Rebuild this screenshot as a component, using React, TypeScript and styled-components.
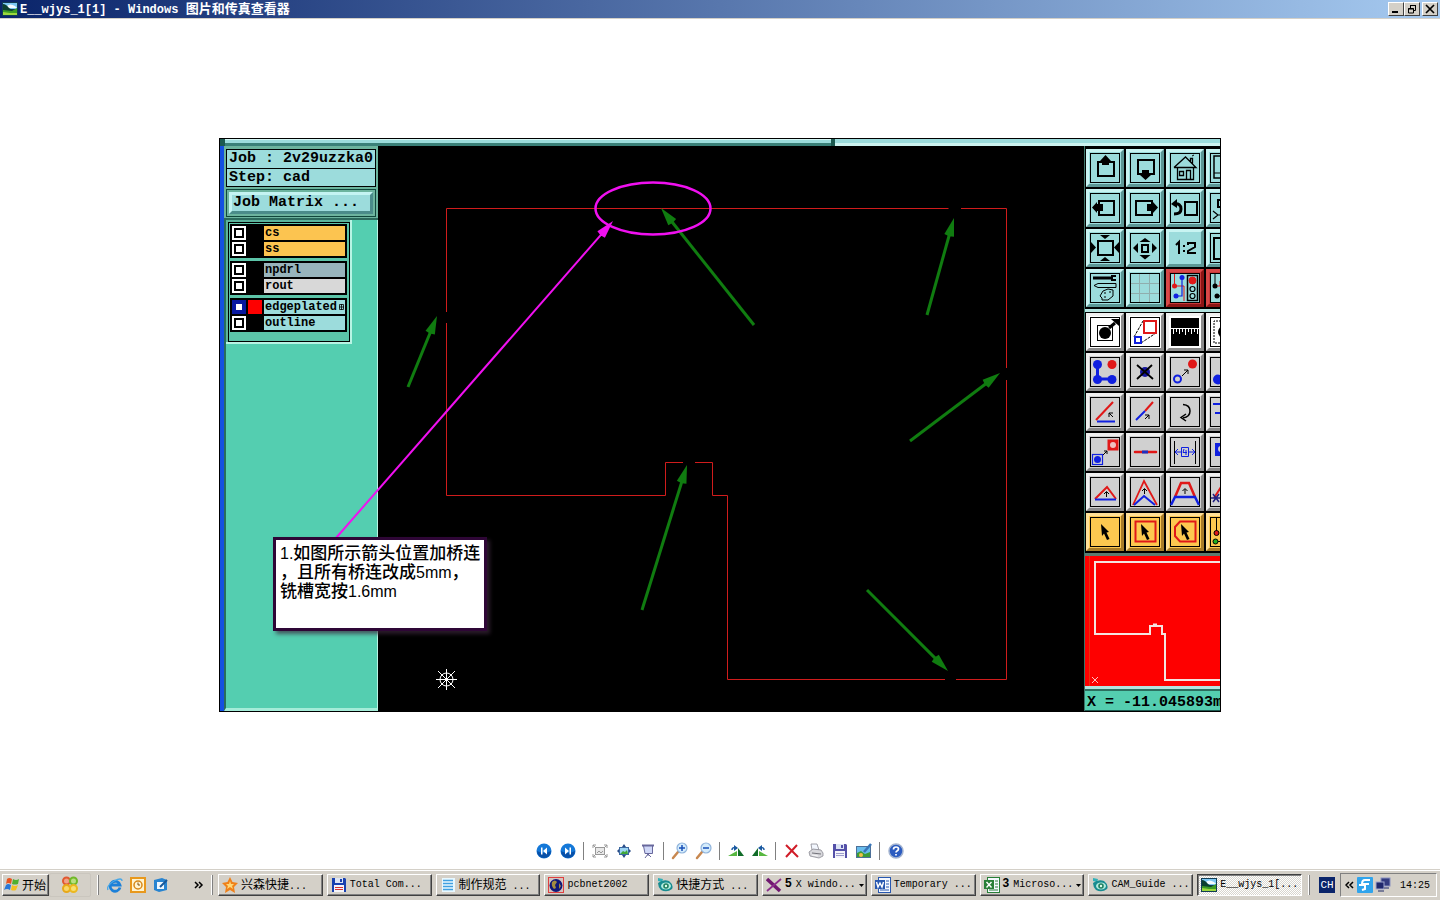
import React from 'react';
import styled, { createGlobalStyle } from 'styled-components';

const face = '#d4d0c8';
const teal = '#54ceb0';
const aqua = '#9cdcdc';
const mono = '"Liberation Mono", "Noto Sans CJK SC", monospace';

const GlobalStyle = createGlobalStyle`
  * { box-sizing: border-box; }
  body { margin: 0; background: #fff; color: #000; font-family: ${mono}; }
  button { font: inherit; color: inherit; margin: 0; }
  svg { display: block; flex: none; }
`;

const Page = styled.div`
  display: flex;
  flex-direction: column;
  min-height: 100vh;
`;

/* ---------- title bar ---------- */

const TitleBar = styled.header`
  display: flex;
  align-items: center;
  gap: 2px;
  height: 19px;
  padding: 0 2px;
  background: linear-gradient(90deg, #0a246a, #a6caf0);
  border-bottom: 1px solid ${face};
`;

const Title = styled.h1`
  flex: 1;
  margin: 0;
  color: #fff;
  font-size: 12px;
  line-height: 16px;
  font-weight: 700;
  white-space: pre;
`;

const Han = styled.span<{ $size: number }>`
  font-family: "Noto Sans CJK SC", sans-serif;
  font-size: ${(p) => p.$size}px;
`;

const WindowButtons = styled.div`
  display: flex;
`;

const WindowButton = styled.button<{ $apart?: boolean }>`
  display: flex;
  align-items: center;
  justify-content: center;
  width: 16px;
  height: 14px;
  padding: 0;
  margin-left: ${(p) => (p.$apart ? 2 : 0)}px;
  background: ${face};
  border: 1px solid;
  border-color: #fff #404040 #404040 #fff;
`;

/* ---------- viewer ---------- */

const Viewer = styled.main`
  flex: 1;
  display: flex;
  align-items: center;
  justify-content: center;
  padding-bottom: 2px;
  overflow: hidden;
`;

const Picture = styled.figure`
  position: relative;
  flex: none;
  margin: 0;
  border: 1px solid #000;
  background: #000;
`;

const TopStrip = styled.div`
  display: flex;
  gap: 4px;
  height: 7px;
  padding-left: 5px;
  background: #1c5a50;
`;

const StripPart = styled.div<{ $width?: number }>`
  width: ${(p) => (p.$width ? `${p.$width}px` : 'auto')};
  flex: ${(p) => (p.$width ? 'none' : 1)};
  background: ${aqua};
  border-top: 1px solid ${(p) => (p.$width ? '#d4f6f4' : aqua)};
  border-bottom: 3px solid ${(p) => (p.$width ? '#3a8078' : '#cdf3f0')};
`;

const Workspace = styled.div`
  display: flex;
`;

const SidePanel = styled.aside`
  display: flex;
  flex-direction: column;
  width: 158px;
  border-left: 4px solid #1450e0;
  background: ${teal};
  font-weight: 700;
`;

const JobHeader = styled.div`
  display: flex;
  flex-direction: column;
  padding: 3px 2px 1px;
  background: #6cb49e;
  border-bottom: 2px solid #2c6a5c;
`;

const JobLine = styled.div<{ $second?: boolean }>`
  height: ${(p) => (p.$second ? 19 : 20)}px;
  margin-top: ${(p) => (p.$second ? -1 : 0)}px;
  padding: 0 2px;
  border: 1px solid #000;
  background: ${aqua};
  font-size: 15px;
  line-height: 18px;
  white-space: pre;
`;

const MatrixBox = styled.div`
  margin-top: 2px;
  padding: 2px;
  border: 1px solid #10483c;
`;

const MatrixButton = styled.button`
  display: block;
  width: 100%;
  height: 22px;
  padding: 0 1px;
  border: 3px solid;
  border-color: #c4f4f2 #4a8c8a #4a8c8a #c4f4f2;
  background: ${aqua};
  font-size: 15px;
  line-height: 16px;
  font-weight: 700;
  text-align: left;
  white-space: pre;
`;

const SideBody = styled.div`
  flex: 1;
  border-left: 2px solid #286c5c;
  border-right: 1px solid #b8f4e4;
  border-bottom: 3px solid #a4ecd8;
`;

const LayerPanel = styled.div`
  width: 126px;
  padding: 2px 0 0 2px;
  background: #5cb49c;
  border-right: 2px solid #b8f4e4;
  border-bottom: 2px solid #b8f4e4;
`;

const LayerList = styled.div`
  display: flex;
  flex-direction: column;
  gap: 3px;
  padding: 1px 2px 9px 1px;
  border: 1px solid #000;
  background: #5cc4a8;
`;

const LayerGroup = styled.div`
  display: flex;
  flex-direction: column;
  gap: 2px;
  padding: 2px;
  background: #000;
`;

const LayerRow = styled.label`
  display: flex;
  align-items: center;
  gap: 2px;
  height: 14px;
`;

const LayerCheck = styled.input<{ $active?: boolean }>`
  appearance: none;
  flex: none;
  width: 14px;
  height: 14px;
  margin: 0;
  border: 2px solid ${(p) => (p.$active ? '#0818a0' : '#fff')};
  background: #fff;
  box-shadow: inset 0 0 0 2px ${(p) => (p.$active ? '#0818a0' : '#000')};
`;

const Swatch = styled.span<{ $color: string }>`
  flex: none;
  width: 14px;
  height: 14px;
  background: ${(p) => p.$color};
`;

const LayerName = styled.span<{ $color: string }>`
  flex: 1;
  display: flex;
  align-items: center;
  justify-content: space-between;
  height: 14px;
  padding: 0 1px;
  background: ${(p) => p.$color};
  font-size: 12px;
  line-height: 14px;
`;

const ToolPanel = styled.aside`
  display: flex;
  flex-direction: column;
  width: 136px;
  overflow: hidden;
  border-left: 1px solid #3c7468;
`;

const ToolGrid = styled.div<{ $top: number }>`
  display: grid;
  grid-template-columns: repeat(4, 38px);
  gap: 2px;
  padding: ${(p) => p.$top}px 0 2px 1px;
  background: #000;
`;

const tones = {
  aqua: [aqua, '#c8f4f2', '#5c9896'],
  red: ['#c83838', '#d84848', '#8c1414'],
  white: ['#fff', '#f0f0f0', '#8c8c8c'],
  grey: ['#d0d0d0', '#efefef', '#8a8a8a'],
  gold: ['#fcc850', '#ffe098', '#a87c28'],
} as const;
type Tone = keyof typeof tones;

const ToolButton = styled.button<{ $tone: Tone }>`
  display: flex;
  width: 38px;
  height: 38px;
  padding: 1px;
  border: 3px solid;
  border-color: ${(p) => `${tones[p.$tone][1]} ${tones[p.$tone][2]} ${tones[p.$tone][2]} ${tones[p.$tone][1]}`};
  background: ${(p) => tones[p.$tone][0]};
`;

const Ridge = styled.div<{ $dark?: boolean }>`
  height: 3px;
  background: ${(p) => (p.$dark ? '#5c7c70' : '#b4e4e0')};
`;

const Coordinates = styled.output`
  display: block;
  height: 22px;
  padding-left: 2px;
  background: ${teal};
  border-top: 2px solid #2c7060;
  border-bottom: 1px solid #1c5a50;
  font-size: 15px;
  line-height: 23px;
  font-weight: 700;
  white-space: pre;
`;

const Annotations = styled.svg`
  position: absolute;
  top: 0;
  left: 0;
`;

const Note = styled.figcaption`
  position: absolute;
  left: 53px;
  top: 398px;
  width: 214px;
  height: 94px;
  padding: 2px 4px;
  border: 3px solid #2e0636;
  background: #fff;
  box-shadow: 3px 3px 4px rgba(60, 40, 60, 0.7);
  font: 16px/19px "Liberation Sans", "Noto Sans CJK SC", sans-serif;
  white-space: pre;
`;

const NoteHan = styled.span`
  font-family: "Noto Sans CJK SC", sans-serif;
  font-size: 17px;
  line-height: 19px;
  font-weight: 500;
`;

const NoteLine = styled.div`
  height: 19px;
`;

/* ---------- viewer toolbar ---------- */

const ViewerTools = styled.nav`
  display: flex;
  justify-content: center;
  align-items: center;
  height: 36px;
`;

const ViewerButton = styled.button`
  display: flex;
  align-items: center;
  justify-content: center;
  width: 24px;
  height: 24px;
  padding: 0;
  border: 0;
  background: none;
`;

const Divider = styled.span`
  width: 1px;
  height: 18px;
  margin: 0 4px 0 3px;
  background: #808080;
`;

/* ---------- taskbar ---------- */

const Taskbar = styled.footer`
  display: flex;
  align-items: center;
  height: 31px;
  padding: 1px 3px 0 2px;
  background: ${face};
  box-shadow: inset 0 1px ${face}, inset 0 2px #fff;
  font-size: 10px;
`;

const StartButton = styled.button`
  display: flex;
  align-items: center;
  gap: 2px;
  width: 47px;
  height: 22px;
  padding: 0 1px 2px;
  background: ${face};
  border: 1px solid;
  border-color: #fff #404040 #404040 #fff;
  box-shadow: inset -1px -1px #808080;
  white-space: nowrap;
`;

const OfficeButton = styled.button`
  display: flex;
  align-items: center;
  justify-content: center;
  width: 42px;
  height: 24px;
  padding: 0;
  border: 1px solid #cac6be;
  border-radius: 2px;
  background: ${face};
`;

const Grip = styled.span`
  flex: none;
  width: 2px;
  height: 20px;
  margin: 0 5px 0 6px;
  border-left: 1px solid #fff;
  border-right: 1px solid #808080;
`;

const QuickLaunch = styled.div`
  display: flex;
  align-items: center;
  gap: 7px;
  width: 101px;
  padding: 0 1px 0 3px;
`;

const QuickButton = styled.button<{ $last?: boolean }>`
  display: flex;
  margin-left: ${(p) => (p.$last ? 'auto' : 0)};
  padding: 0;
  border: 0;
  background: none;
`;

const Tasks = styled.div`
  flex: 1;
  display: flex;
  gap: 4px;
  min-width: 0;
`;

const Task = styled.button<{ $active?: boolean }>`
  flex: 1 1 0;
  display: flex;
  align-items: center;
  gap: 3px;
  min-width: 0;
  height: 22px;
  padding: 0 2px 0 3px;
  overflow: hidden;
  background: ${(p) => (p.$active ? 'repeating-conic-gradient(#fff 0 25%, #d8d5ce 0 50%) 0 0 / 2px 2px' : face)};
  border: 1px solid;
  border-color: ${(p) => (p.$active ? '#404040 #fff #fff #404040' : '#fff #404040 #404040 #fff')};
  box-shadow: ${(p) => (p.$active ? 'inset 1px 1px #808080' : 'inset -1px -1px #808080')};
  text-align: left;
`;

const TaskLabel = styled.span`
  flex: 1;
  min-width: 0;
  white-space: pre;
  line-height: 18px;
`;

const Count = styled.b`
  margin-right: 4px;
  font: 700 12px "Liberation Sans", sans-serif;
`;

const Language = styled.button`
  width: 16px;
  height: 16px;
  margin-left: 4px;
  padding: 0;
  border: 0;
  background: #0a246a;
  color: #fff;
  font-size: 11px;
  line-height: 16px;
`;

const Tray = styled.div`
  display: flex;
  align-items: center;
  gap: 2px;
  width: 97px;
  height: 24px;
  margin-left: 5px;
  padding: 0 6px 0 4px;
  border: 1px solid;
  border-color: #808080 #fff #fff #808080;
`;

const Clock = styled.time`
  margin-left: auto;
`;

/* ---------- drawings ---------- */

const Chevrons = ({ left }: { left?: boolean }) => (
  <svg width="10" height="8" viewBox="0 0 10 8" fill="none" stroke="#000" strokeWidth="1.5">
    <path d={left ? 'M4 1L1 4L4 7M8 1L5 4L8 7' : 'M1 1L4 4L1 7M5 1L8 4L5 7'} />
  </svg>
);

const PhotoIcon = () => (
  <svg width="16" height="16" viewBox="0 0 16 16">
    <rect x="0" y="1" width="16" height="14" fill="#123c54" />
    <path d="M1 2H15V8H1Z" fill="#7cc8f4" />
    <path d="M5 5Q8 2 13 5L15 7H5Z" fill="#f4fbff" />
    <path d="M1 3Q4 3 7 7L12 10H1Z" fill="#0c4030" />
    <path d="M1 9L10 10L15 7V14H1Z" fill="#3c9c24" />
    <path d="M1 11L8 12L15 12V14H1Z" fill="#9cd83c" />
  </svg>
);

const r = '#e01818';
const b = '#1020e0';
const Frame = () => <rect x="0.5" y="0.5" width="29" height="29" fill="none" stroke="#000" strokeWidth="1" />;

const Glyph = ({ children, bare, fill }: { children?: React.ReactNode; bare?: boolean; fill?: string }) => (
  <svg width="30" height="30" viewBox="0 0 30 30" fill="none" stroke="#000" strokeWidth="2">
    {fill && <rect width="30" height="30" fill={fill} stroke="none" />}
    {!bare && <Frame />}
    {children}
  </svg>
);

const MiniArrow = ({ d }: { d: string }) => <path d={d} stroke="#000" strokeWidth="1" />;
const Cursor = () => <path d="M11 7L19 15L16.5 15.5L19.5 22L17 23L14 16.5L12 19Z" fill="#000" stroke="none" />;

const tools: { name: string; tone: Tone; art: React.ReactNode }[] = [
  { name: 'Pan up', tone: 'aqua', art: <Glyph><rect x="8" y="9" width="16" height="14" /><path d="M15.500 2L21 8H19V12H12V8H10Z" fill="#000" stroke="none" /></Glyph> },
  { name: 'Pan down', tone: 'aqua', art: <Glyph><rect x="8" y="7" width="16" height="14" /><path d="M15.500 27L10 22H12V17H19V22H21Z" fill="#000" stroke="none" /></Glyph> },
  { name: 'Home', tone: 'aqua', art: <Glyph><path d="M4 14.500L15.500 4L26 14.500H4M7.500 15V26.500H23.500V15M16.500 26V17.500H20.500V26M9.500 18.500H13.500V22.500H9.500ZM20.500 9V5.500H22.500V11" strokeWidth="1.300" /><path d="M22 3l2-1" strokeWidth="1" /></Glyph> },
  { name: 'Full view', tone: 'aqua', art: <Glyph><rect x="4" y="3" width="23" height="22" strokeWidth="1.500" /><path d="M4 20H27" strokeWidth="1" /></Glyph> },
  { name: 'Pan left', tone: 'aqua', art: <Glyph><rect x="9" y="8" width="15" height="14" /><path d="M2 14.500L7 9V11H13V18H7V20Z" fill="#000" stroke="none" /></Glyph> },
  { name: 'Pan right', tone: 'aqua', art: <Glyph><rect x="6" y="8" width="16" height="14" /><path d="M28 14.500L23 9V11H17V18H23V20Z" fill="#000" stroke="none" /></Glyph> },
  { name: 'Previous view', tone: 'aqua', art: <Glyph><rect x="15" y="9" width="12" height="13" /><path d="M4 11Q11 10 11 16Q11 21 4 21" strokeWidth="3" /><path d="M1 11L7 6V15Z" fill="#000" stroke="none" /></Glyph> },
  { name: 'Series view', tone: 'aqua', art: <Glyph><rect x="8" y="7" width="12" height="7" /><path d="M3 18L8 22L3 26M8 22H20" strokeWidth="1.200" /></Glyph> },
  { name: 'Zoom in', tone: 'aqua', art: <Glyph><rect x="8" y="8" width="15" height="14" /><path d="M10 2H20L15 6ZM10 28H20L15 24ZM1 9V20L6 14.500ZM29 9V20L24 14.500Z" fill="#000" stroke="none" /></Glyph> },
  { name: 'Zoom out', tone: 'aqua', art: <Glyph><rect x="12" y="12" width="6" height="7" /><path d="M9.500 9H20.500L15 5ZM9.500 22H20.500L15 26.500ZM8 10V20L3 15ZM22 10V20L27 15Z" fill="#000" stroke="none" /></Glyph> },
  { name: 'Scale', tone: 'aqua', art: <Glyph bare><path d="M6 12L9 9V21M13 13H15M13 18H15M18 12V10H25V14L18 18V20H26" /></Glyph> },
  { name: 'Window', tone: 'aqua', art: <Glyph><rect x="4" y="5" width="23" height="21" /></Glyph> },
  { name: 'Setup', tone: 'aqua', art: <Glyph><path d="M3 5H21" strokeWidth="3" /><path d="M26 3H22V7H26" strokeWidth="2" /><path d="M4 12.500L8 10.500H26V14.500H8ZM12 25L10 23L13 18L18 16L23 17V23L18 27L12 27ZM14 20h2M19 19h2M14 24h2" strokeWidth="1" /></Glyph> },
  { name: 'Grid', tone: 'aqua', art: <Glyph><path d="M1 10.500H29M1 20.500H29M9.500 1V29M19.500 1V29" stroke="#90aeae" strokeWidth="1" /></Glyph> },
  { name: 'Snap', tone: 'red', art: <Glyph fill={aqua}><rect x="17.500" y="2.500" width="10" height="25" strokeWidth="1.500" /><circle cx="22.500" cy="7.500" r="3.500" fill={r} stroke={r} strokeWidth="1" /><circle cx="22.500" cy="16" r="2.500" strokeWidth="1.200" /><circle cx="22.500" cy="23" r="2.500" strokeWidth="1.200" /><path d="M4.500 1V13H14V28" stroke={r} strokeWidth="1" /><path d="M12 4V23H6" stroke={b} strokeWidth="1.200" /><circle cx="4.500" cy="13" r="2.500" fill={r} stroke="none" /><circle cx="12" cy="4.500" r="2.500" fill={b} stroke="none" /><circle cx="6" cy="23" r="2.500" fill={b} stroke="none" /></Glyph> },
  { name: 'Nets', tone: 'red', art: <Glyph fill={aqua}><path d="M5 1V13M7 23H14" strokeWidth="1" /><path d="M5 13H10V8" stroke={r} strokeWidth="1" /><circle cx="5" cy="13" r="2.500" fill="#000" stroke="none" /><circle cx="7" cy="23" r="2.500" fill="#000" stroke="none" /></Glyph> },

  { name: 'Select pad', tone: 'white', art: <Glyph><rect x="7.500" y="8.500" width="15" height="15" strokeWidth="1" /><circle cx="15" cy="16" r="6" fill="#000" stroke="none" /><path d="M19 11L25 6" strokeWidth="3" /><path d="M21 2H29V9Z" fill="#000" stroke="none" /></Glyph> },
  { name: 'Resize', tone: 'white', art: <Glyph><path d="M4 20L13 4M11 26L26 16" strokeWidth="1" strokeDasharray="3 1" /><rect x="14" y="4" width="12" height="12" stroke={r} /><rect x="5" y="20" width="6" height="6" stroke={b} /></Glyph> },
  { name: 'Measure', tone: 'white', art: <Glyph bare><rect x="1" y="1" width="28" height="28" fill="#000" stroke="none" /><path d="M1 11.500H29M3.500 12V17M6.500 12V15M9.500 12V17M12.500 12V15M15.500 12V18M18.500 12V15M21.500 12V17M24.500 12V15M27.500 12V17" stroke="#fff" strokeWidth="1" /></Glyph> },
  { name: 'Highlight', tone: 'white', art: <Glyph><path d="M14 4H4V26H14" strokeWidth="1" strokeDasharray="2 1" /><circle cx="14" cy="15" r="6" fill="#000" stroke="none" /></Glyph> },
  { name: 'Chain', tone: 'grey', art: <Glyph><path d="M7.500 7V22H22" stroke={b} strokeWidth="3" /><g fill={b} stroke="none"><circle cx="7.500" cy="7.500" r="4.500" /><circle cx="7.500" cy="22.500" r="4.500" /><circle cx="22" cy="22.500" r="4.500" /></g><circle cx="22" cy="7.500" r="4.500" fill={r} stroke="none" /></Glyph> },
  { name: 'Delete', tone: 'grey', art: <Glyph><circle cx="15" cy="15" r="5" fill="#14149c" stroke="none" /><path d="M7 8L23 22M22 8L7 22" strokeWidth="1.800" /></Glyph> },
  { name: 'Move', tone: 'grey', art: <Glyph><circle cx="22.500" cy="7" r="4.500" fill={r} stroke="none" /><circle cx="7.500" cy="22" r="3.500" stroke={b} /><MiniArrow d="M12 19L18 13M14 13H18V17" /></Glyph> },
  { name: 'Copy', tone: 'grey', art: <Glyph><circle cx="8" cy="22.500" r="5" fill={b} stroke="none" /></Glyph> },
  { name: 'Angle', tone: 'grey', art: <Glyph><path d="M6 23L23 5" stroke={r} /><path d="M7 24.500H25" stroke={b} /><MiniArrow d="M23 20L19 16M19 20V16H23" /></Glyph> },
  { name: 'Extend', tone: 'grey', art: <Glyph><path d="M15 14L23 5" stroke={r} /><path d="M6 23L15 14" stroke={b} /><MiniArrow d="M15 22L19 18M15 18H19V22" /></Glyph> },
  { name: 'Rotate', tone: 'grey', art: <Glyph><path d="M13 7.500Q20 8 20 14Q20 20 13 21" strokeWidth="1.500" /><path d="M16 17L11 20.500L16 24" strokeWidth="1.500" /></Glyph> },
  { name: 'Lines', tone: 'grey', art: <Glyph><path d="M3 7H20M5 16H20" stroke={b} /></Glyph> },
  { name: 'Swap pad', tone: 'grey', art: <Glyph><rect x="18" y="3" width="10" height="10" fill={r} stroke={r} strokeWidth="1" /><circle cx="23" cy="8" r="3" fill="#eec0c0" stroke="none" /><rect x="2.500" y="17.500" width="10" height="10" stroke={b} strokeWidth="1.200" /><circle cx="7.500" cy="22.500" r="3.500" fill={b} stroke="none" /><MiniArrow d="M13 18L17 14M14 14H17V17" /></Glyph> },
  { name: 'Break', tone: 'grey', art: <Glyph><path d="M5 15H26" stroke={r} strokeWidth="2.500" strokeLinecap="round" /><path d="M12 15H18" stroke="#2030c0" strokeWidth="3" /></Glyph> },
  { name: 'Spacing', tone: 'grey', art: <Glyph><path d="M4.500 4V27M25.500 4V27" strokeWidth="1" /><path d="M11.500 10.500H18.500V19.500H11.500ZM5 15H11M19 15H25M8 12L5 15L8 18M22 12L25 15L22 18M14 12L13 15.500H17M16 13V18" stroke={b} strokeWidth="1" /></Glyph> },
  { name: 'Surface', tone: 'grey', art: <Glyph><path d="M5 6H20V24H11V19H5Z" fill={b} stroke="none" /><circle cx="11" cy="12" r="3" fill="#d0d0d0" stroke="none" /></Glyph> },
  { name: 'Triangle', tone: 'grey', art: <Glyph><path d="M5 22L17 10L26 22" stroke={r} /><path d="M5 22.500H26" stroke={b} /><MiniArrow d="M16.500 20V15M14 17L16.500 14.500L19 17" /></Glyph> },
  { name: 'Peak', tone: 'grey', art: <Glyph><path d="M3 28L14 4L27 28" stroke={r} strokeWidth="1.800" /><path d="M4 28L14 19L25 28" stroke={b} /><MiniArrow d="M14.500 17V12M12 14L14.500 11.500L17 14" /></Glyph> },
  { name: 'Taper', tone: 'grey', art: <Glyph><path d="M5 20L11 6H19L25 20" stroke={r} strokeWidth="2.500" /><path d="M1 28L5 20H25L29 28" stroke={b} strokeWidth="2.500" /><MiniArrow d="M15 17V12M12.500 14L15 11.500L17.500 14" /></Glyph> },
  { name: 'Trim', tone: 'grey', art: <Glyph><path d="M4 21L13 7" stroke={r} /><path d="M1 21H20M3 17L9 25M9 17L3 25" stroke="#202080" strokeWidth="1.500" /></Glyph> },
  { name: 'Select', tone: 'gold', art: <Glyph><Cursor /></Glyph> },
  { name: 'Select in box', tone: 'gold', art: <Glyph><rect x="5.500" y="4.500" width="20" height="20" stroke={r} /><Cursor /></Glyph> },
  { name: 'Select in polygon', tone: 'gold', art: <Glyph><path d="M10 4.500H25.500V24.500H10L5 19V10Z" stroke={r} /><Cursor /></Glyph> },
  { name: 'Select net', tone: 'gold', art: <Glyph><path d="M6.500 1V16M5 24.500H14" strokeWidth="1" /><circle cx="6.500" cy="16" r="2.500" fill={r} strokeWidth="1" /><circle cx="5.500" cy="24.500" r="2.500" fill="#20b020" strokeWidth="1" /></Glyph> },
];

const Tools = ({ from, to, top }: { from: number; to: number; top: number }) => (
  <ToolGrid $top={top}>
    {tools.slice(from, to).map((t) => (
      <ToolButton key={t.name} $tone={t.tone} aria-label={t.name}>{t.art}</ToolButton>
    ))}
  </ToolGrid>
);

const BoardOutline = () => (
  <svg width="706" height="565" viewBox="378 146 706 565" fill="none" stroke="#d01c1c" strokeWidth="1">
    <path d="M948.500 208.500H446.500V312M446.500 323V495.500H665.500V462.500H683M695 462.500H712.500V495.500H727.500V679.500H945M956 679.500H1006.500V380M1006.500 368V208.500H961" />
    <g stroke="#fff">
      <circle cx="446.500" cy="679.500" r="6.500" />
      <path d="M436 679.500H457M446.500 669V690M438 671L455 688M455 671L438 688" />
    </g>
  </svg>
);

const Minimap = () => (
  <svg width="136" height="130" viewBox="0 0 136 130">
    <rect width="136" height="130" fill="#fe0000" />
    <path d="M4.500 0V130" stroke="#e83010" />
    <path d="M136 6H10V78H65V70H77V78H80V124H136M68 68.500H72" fill="none" stroke="#f4e4e0" strokeWidth="2" />
    <path d="M7 121L13 127M13 121L7 127" stroke="#ffc0c0" />
  </svg>
);

const arrows: [number, number, number, number][] = [
  [754, 325, 661, 208],
  [927, 315, 954, 218],
  [408, 387, 437, 316],
  [910, 441, 1000, 373],
  [642, 610, 687, 465],
  [867, 590, 948, 671],
];

const Arrow = ({ x1, y1, x2, y2, color, width = 3 }: { x1: number; y1: number; x2: number; y2: number; color: string; width?: number }) => {
  const angle = (Math.atan2(y2 - y1, x2 - x1) * 180) / Math.PI;
  const length = Math.hypot(x2 - x1, y2 - y1);
  return (
    <g transform={`translate(${x2} ${y2}) rotate(${angle})`}>
      <path d={`M${-length} 0H-14`} stroke={color} strokeWidth={width} />
      <path d="M0 0L-18 5L-19 0L-18 -5Z" fill={color} />
    </g>
  );
};

const layerGroups = [
  [{ name: 'cs', color: '#fcc450' }, { name: 'ss', color: '#fcc450' }],
  [{ name: 'npdrl', color: '#98b4bc' }, { name: 'rout', color: '#d8d8d8' }],
  [{ name: 'edgeplated', color: aqua, active: true }, { name: 'outline', color: aqua }],
] as { name: string; color: string; active?: boolean }[][];

const Ball = ({ children }: { children: React.ReactNode }) => (
  <svg width="16" height="16" viewBox="0 0 16 16">
    <circle cx="8" cy="8" r="7.500" fill="#1478d8" />
    <path d="M1 8A7 7 0 0 0 15 8Q8 12 1 8Z" fill="#0850a8" />
    {children}
  </svg>
);

const Lens = ({ plus }: { plus?: boolean }) => (
  <svg width="18" height="18" viewBox="0 0 18 18" fill="none">
    <path d="M2 16L7 10" stroke="#c88850" strokeWidth="2.500" strokeLinecap="round" />
    <circle cx="11" cy="6" r="5" fill="#d4ecfc" stroke="#90b4dc" strokeWidth="1.200" />
    <path d={plus ? 'M8 6H14M11 3V9' : 'M8 6H14'} stroke="#1850b8" strokeWidth="1.500" />
  </svg>
);

const Hill = ({ flip }: { flip?: boolean }) => (
  <svg width="16" height="16" viewBox="0 0 16 16">
    <g transform={flip ? 'matrix(-1 0 0 1 16 0)' : undefined}>
      <path d="M0 13L9 8V13Z" fill="#58b840" />
      <path d="M10 5L16 13H10Z" fill="#106c28" />
      <path d="M4 7Q4 4 7 5" fill="none" stroke="#1858a0" strokeWidth="1.500" />
      <path d="M6 2L10 5L6 8Z" fill="#1858a0" />
    </g>
  </svg>
);

const Floppy = ({ color }: { color: string }) => (
  <svg width="16" height="16" viewBox="0 0 16 16">
    <path d="M1 1H14L15 2V15H1Z" fill={color} />
    <rect x="4" y="1" width="8" height="5" fill="#dce4f4" />
    <rect x="9" y="2" width="2" height="3" fill={color} />
    <rect x="3" y="8" width="10" height="7" fill="#f4f4fa" />
    <path d="M4 10.500H12M4 12.500H12" stroke={color === '#1840b0' ? '#d83030' : '#9c9ccc'} />
  </svg>
);

const viewerGroups: { name: string; art: React.ReactNode }[][] = [
  [
    { name: '上一个图像', art: <Ball><path d="M5 4.500H6.500V11.500H5ZM11 4.500V11.500L7 8Z" fill="#fff" /></Ball> },
    { name: '下一个图像', art: <Ball><path d="M9.500 4.500H11V11.500H9.500ZM5 4.500V11.500L9 8Z" fill="#fff" /></Ball> },
  ],
  [
    { name: '最合适', art: <svg width="16" height="16" viewBox="0 0 16 16" fill="none" stroke="#989898"><rect x="3.500" y="4.500" width="9" height="7" fill="#e8e8e8" /><path d="M5 10L7 8L9 10L11 8M1 5V2H4M12 2H15V5M1 11V14H4M12 14H15V11M1 2L3 4M15 2L13 4M1 14L3 12M15 14L13 12" /></svg> },
    { name: '实际大小', art: <svg width="16" height="16" viewBox="0 0 16 16"><rect x="3.500" y="4.500" width="9" height="7" fill="#9cd4f4" stroke="#3c68a0" /><path d="M4 11L7 8L9 9L11 7L12 11Z" fill="#40a838" /><path d="M8 1L10 4H6ZM8 15L6 12H10ZM1 8L3 6V10ZM15 8L13 6V10Z" fill="#284c88" /></svg> },
    { name: '幻灯片', art: <svg width="16" height="16" viewBox="0 0 16 16" fill="none" stroke="#68689c"><path d="M2 2.500H14" strokeWidth="2" /><path d="M3.500 3H12.500V10.500H5Z" fill="#d0d8f8" /><path d="M8 11L5 15M8 11L11 14M8 11V13" /></svg> },
  ],
  [{ name: '放大', art: <Lens plus /> }, { name: '缩小', art: <Lens /> }],
  [{ name: '顺时针旋转', art: <Hill /> }, { name: '逆时针旋转', art: <Hill flip /> }],
  [
    { name: '删除', art: <svg width="16" height="16" viewBox="0 0 16 16"><path d="M2 2L14 14M13 2L2 14" stroke="#d01c28" strokeWidth="2" /></svg> },
    { name: '打印', art: <svg width="16" height="16" viewBox="0 0 16 16" stroke="#8c8c94" strokeWidth="0.800"><path d="M4 7L3 1L9 1L11 7Z" fill="#f4f8ff" /><path d="M1 9L5 6L13 7L15 10V13L11 15L2 13Z" fill="#d8d8dc" /><path d="M4 10L13 11" stroke="#585860" /><path d="M4 12L10 13" stroke="#fff" /></svg> },
    { name: '复制到', art: <Floppy color="#5450a8" /> },
    { name: '编辑', art: <svg width="16" height="16" viewBox="0 0 16 16"><rect x="0.500" y="3.500" width="14" height="11" fill="#68bcec" stroke="#4c7098" /><path d="M1 14L1 10L5 8L9 11L14 9V14Z" fill="#3c9c38" /><path d="M15 1L8 9" stroke="#3874b8" strokeWidth="2.500" /><circle cx="5" cy="12" r="2" fill="#f0c048" /></svg> },
  ],
  [{ name: '帮助', art: <svg width="16" height="16" viewBox="0 0 16 16" fill="none"><circle cx="8" cy="8" r="7" fill="#2c5cc0" stroke="#a4b4d0" strokeWidth="1.500" /><path d="M5.500 6.500Q5.500 4 8 4Q10.500 4 10.500 6Q10.500 7 9 8Q8 8.500 8 9.500M8 11V12.500" stroke="#fff" strokeWidth="1.700" /></svg> }],
];

const Explorer = () => (
  <svg width="16" height="16" viewBox="0 0 16 16" fill="none">
    <path d="M13 10.500A5 5 0 1 1 13 8H4" stroke="#1c80d8" strokeWidth="2.800" />
    <path d="M1 13Q-1 9 7 4Q15 0 15 4" stroke="#48a8e8" strokeWidth="1.300" />
  </svg>
);

const Eye = () => (
  <svg width="16" height="16" viewBox="0 0 16 16">
    <path d="M1 1L6 2L5 5L1 4Z" fill="#30b0b8" />
    <path d="M1 6Q6 2 12 4Q17 8 15 12Q10 16 4 13Q1 10 1 6Z" fill="#188c90" />
    <ellipse cx="9" cy="9" rx="5" ry="3.500" fill="#b4ece0" />
    <circle cx="9" cy="9" r="2.800" fill="#208060" />
    <circle cx="9" cy="9" r="1.200" fill="#e0fff0" />
  </svg>
);

const OfficeDoc = ({ color, mark }: { color: string; mark: string }) => (
  <svg width="16" height="16" viewBox="0 0 16 16">
    <rect x="3.500" y="0.500" width="12" height="15" fill="#f4f8ff" stroke={color} />
    <path d="M11 4H14M11 7H14M11 10H14M5 13H14" stroke={color} />
    <rect x="0" y="3" width="10" height="9" fill={color} />
    <path d={mark} stroke="#fff" fill="none" strokeWidth="1.400" />
  </svg>
);

const tasks: { icon: React.ReactNode; han?: string; text: string; count?: string; active?: boolean }[] = [
  { icon: <svg width="16" height="16" viewBox="0 0 16 16"><path d="M8 0L10.500 5L16 6L12 10L13 16L8 13L3 16L4 10L0 6L5.500 5Z" fill="#f08018" /><path d="M8 4L9 7H12L10 9L11 12L8 10L5 12L6 9L4 7H7Z" fill="#ffd878" /></svg>, han: '兴森快捷', text: '...' },
  { icon: <Floppy color="#1840b0" />, text: 'Total Com...' },
  { icon: <svg width="16" height="16" viewBox="0 0 16 16"><rect x="2" y="1" width="13" height="14" fill="#e8f8ff" /><path d="M3 3.500H13M3 6.500H13M3 9.500H13M3 12.500H13" stroke="#40a0e0" strokeWidth="1.500" /></svg>, han: '制作规范', text: ' ...' },
  { icon: <svg width="16" height="16" viewBox="0 0 16 16"><rect x="0.500" y="0.500" width="15" height="15" fill="#d4c4c0" stroke="#e04040" /><circle cx="8" cy="8.500" r="6.500" fill="#101878" /><path d="M4 5Q7 2 9 5L7 8L8 11L6 12Q3 9 4 5ZM11 6L13 9L11 12Z" fill="#a48c40" /></svg>, text: 'pcbnet2002' },
  { icon: <Eye />, han: '快捷方式', text: ' ...' },
  { icon: <svg width="16" height="16" viewBox="0 0 16 16"><path d="M1 2L14 14" stroke="#701870" strokeWidth="3.500" /><path d="M15 2L1 14" stroke="#8c2c8c" strokeWidth="1.800" /></svg>, count: '5', text: 'X windo...' },
  { icon: <OfficeDoc color="#2858b0" mark="M1.500 5L3 10L5 6L7 10L8.500 5" />, text: 'Temporary ...' },
  { icon: <OfficeDoc color="#288038" mark="M2.500 5L7.500 10.500M7.500 5L2.500 10.500" />, count: '3', text: 'Microso...' },
  { icon: <Eye />, text: 'CAM_Guide ...' },
  { icon: <PhotoIcon />, text: 'E__wjys_1[...', active: true },
];

export default function App() {
  return (
    <Page>
      <GlobalStyle />
      <TitleBar>
        <PhotoIcon />
        <Title>E__wjys_1[1] - Windows <Han $size={13}>图片和传真查看器</Han></Title>
        <WindowButtons>
          <WindowButton aria-label="最小化"><svg width="10" height="10" viewBox="0 0 10 10"><path d="M1 8H7" stroke="#000" strokeWidth="2" /></svg></WindowButton>
          <WindowButton aria-label="还原"><svg width="10" height="10" viewBox="0 0 10 10" fill="none" stroke="#000"><path d="M3.500 4V1.500H8.500V6.500H7M3 1.500H9M1.500 4.500H6.500V9H1.500ZM1 5H7" /></svg></WindowButton>
          <WindowButton $apart aria-label="关闭"><svg width="10" height="10" viewBox="0 0 10 10"><path d="M1 1L9 9M9 1L1 9" stroke="#000" strokeWidth="1.700" /></svg></WindowButton>
        </WindowButtons>
      </TitleBar>

      <Viewer>
        <Picture>
          <TopStrip>
            <StripPart $width={606} />
            <StripPart />
          </TopStrip>
          <Workspace>
            <SidePanel>
              <JobHeader>
                <JobLine>Job : 2v29uzzka0</JobLine>
                <JobLine $second>Step: cad</JobLine>
                <MatrixBox><MatrixButton>Job Matrix ...</MatrixButton></MatrixBox>
              </JobHeader>
              <SideBody>
                <LayerPanel>
                  <LayerList>
                    {layerGroups.map((group) => (
                      <LayerGroup key={group[0].name}>
                        {group.map((layer) => (
                          <LayerRow key={layer.name}>
                            <LayerCheck type="checkbox" $active={layer.active} />
                            <Swatch $color={layer.active ? '#fe0000' : '#000'} />
                            <LayerName $color={layer.color}>
                              {layer.name}
                              {layer.active && <svg width="5" height="6" viewBox="0 0 5 6" fill="none" stroke="#000"><path d="M0.500 0.500H4.500V5.500H0.500ZM2.500 0V6M0 3H5" strokeWidth="0.800" /></svg>}
                            </LayerName>
                          </LayerRow>
                        ))}
                      </LayerGroup>
                    ))}
                  </LayerList>
                </LayerPanel>
              </SideBody>
            </SidePanel>
            <BoardOutline />
            <ToolPanel>
              <Tools from={0} to={16} top={3} />
              <Ridge />
              <Tools from={16} to={40} top={1} />
              <Ridge $dark />
              <Minimap />
              <Ridge />
              <Coordinates>X = -11.045893m</Coordinates>
            </ToolPanel>
          </Workspace>
          <Annotations width="1000" height="572" viewBox="220 139 1000 572" fill="none">
            {arrows.map(([x1, y1, x2, y2]) => (
              <Arrow key={`${x1}-${y1}`} x1={x1} y1={y1} x2={x2} y2={y2} color="#107c10" />
            ))}
            <ellipse cx="653" cy="208.500" rx="57.500" ry="26" stroke="#f010f0" strokeWidth="2.500" />
            <Arrow x1={336} y1={538} x2={613} y2={221} color="#f010f0" width={2} />
          </Annotations>
          <Note>
            <NoteLine>1.<NoteHan>如图所示箭头位置加桥连</NoteHan></NoteLine>
            <NoteLine><NoteHan>，且所有桥连改成</NoteHan>5mm<NoteHan>，</NoteHan></NoteLine>
            <NoteLine><NoteHan>铣槽宽按</NoteHan>1.6mm</NoteLine>
          </Note>
        </Picture>
      </Viewer>

      <ViewerTools>
        {viewerGroups.map((group, i) => (
          <React.Fragment key={group[0].name}>
            {i > 0 && <Divider />}
            {group.map((item) => <ViewerButton key={item.name} aria-label={item.name}>{item.art}</ViewerButton>)}
          </React.Fragment>
        ))}
      </ViewerTools>

      <Taskbar>
        <StartButton>
          <svg width="16" height="16" viewBox="0 0 16 16">
            <path d="M3 3Q5 1 8 3L7 8Q4 6 2 8Z" fill="#e85420" />
            <path d="M9 3Q12 5 15 3L14 8Q11 9 8 8Z" fill="#50b030" />
            <path d="M2 9Q4 7 7 9L6 14Q3 12 0 14Z" fill="#2878d8" />
            <path d="M8 9Q11 11 14 9L12 14Q10 15 7 14Z" fill="#f4c020" />
          </svg>
          <Han $size={12}>开始</Han>
        </StartButton>
        <OfficeButton aria-label="Office">
          <svg width="18" height="18" viewBox="0 0 18 18" fill="none" strokeWidth="2">
            <circle cx="5.500" cy="5" r="3.500" fill="#f0a088" stroke="#e05830" />
            <circle cx="12.500" cy="5" r="3.500" fill="#b8e080" stroke="#70b828" />
            <circle cx="5.500" cy="12.500" r="3.500" fill="#f8d868" stroke="#e8a818" />
            <circle cx="12.500" cy="12.500" r="3.500" fill="#f8e070" stroke="#ecb820" />
          </svg>
        </OfficeButton>
        <Grip />
        <QuickLaunch>
          <QuickButton aria-label="Internet Explorer"><Explorer /></QuickButton>
          <QuickButton aria-label="Outlook">
            <svg width="16" height="16" viewBox="0 0 16 16" fill="none"><rect x="1" y="1" width="14" height="14" fill="#fff4d0" stroke="#e8981c" strokeWidth="2" /><circle cx="8" cy="8" r="4" stroke="#d88818" strokeWidth="1.500" /><path d="M8 5.500V8H10" stroke="#805010" /></svg>
          </QuickButton>
          <QuickButton aria-label="显示桌面">
            <svg width="16" height="16" viewBox="0 0 16 16"><path d="M1 3L9 1L14 3V13L6 15L1 13Z" fill="#2884d0" /><path d="M4 5H11V12H4Z" fill="#f0f8ff" /><path d="M14 3L7 10" stroke="#185898" strokeWidth="2" /></svg>
          </QuickButton>
          <QuickButton $last aria-label="更多"><Chevrons /></QuickButton>
        </QuickLaunch>
        <Grip />
        <Tasks>
          {tasks.map((t) => (
            <Task key={t.text + (t.han ?? '')} $active={t.active}>
              {t.icon}
              <TaskLabel>
                {t.count && <Count>{t.count}</Count>}
                {t.han && <Han $size={12}>{t.han}</Han>}
                {t.text}
              </TaskLabel>
              {t.count && <svg width="5" height="3" viewBox="0 0 5 3"><path d="M0 0H5L2.500 3Z" fill="#000" /></svg>}
            </Task>
          ))}
        </Tasks>
        <Grip />
        <Language>CH</Language>
        <Tray>
          <Chevrons left />
          <svg width="16" height="16" viewBox="0 0 16 16"><rect width="16" height="16" rx="1" fill="#30a4ec" /><path d="M13 3H8Q5 3 5 7H12M2 8H8V12L5 13" fill="none" stroke="#fff" strokeWidth="2" /></svg>
          <svg width="16" height="16" viewBox="0 0 16 16"><rect x="6" y="1" width="9" height="8" fill="#343c80" stroke="#8890c0" /><rect x="1" y="5" width="8" height="7" fill="#20286c" stroke="#a0a8d0" /><path d="M3 14H9M9 11H14" stroke="#787c98" strokeWidth="2" /></svg>
          <Clock>14:25</Clock>
        </Tray>
      </Taskbar>
    </Page>
  );
}
